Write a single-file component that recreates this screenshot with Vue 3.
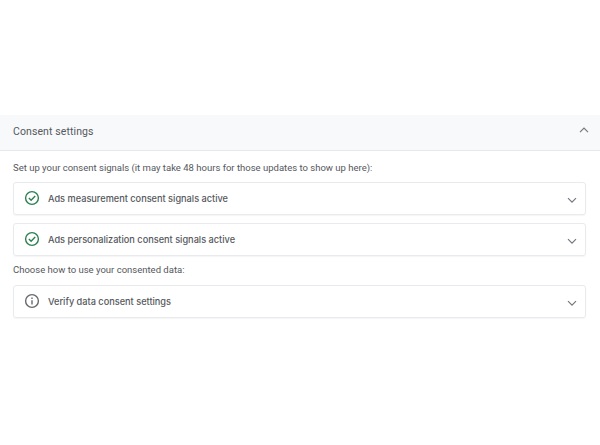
<script setup>
const signals = [
  { id: 1, label: 'Ads measurement consent signals active' },
  { id: 2, label: 'Ads personalization consent signals active' }
]
</script>

<template>
  <div class="page">
    <section class="panel">
      <header class="panel-head">
        <span class="panel-title">Consent settings</span>
        <svg class="chev-up" width="14" height="14" viewBox="0 0 14 14" fill="none">
          <path d="M3 9.2 L7 5.2 L11 9.2" stroke="#74787d" stroke-width="1.2" />
        </svg>
      </header>
      <div class="panel-body">
        <p class="hint first">Set up your consent signals (it may take 48 hours for those updates to show up here):</p>
        <div v-for="s in signals" :key="s.id" class="row">
          <svg class="icon" width="16" height="16" viewBox="0 0 16 16" fill="none">
            <circle cx="8" cy="8" r="6.4" stroke="#2b8050" stroke-width="1.4" />
            <path d="M4.9 8.1 L7.1 10.3 L11.2 6" stroke="#2b8050" stroke-width="1.4" />
          </svg>
          <span class="label">{{ s.label }}</span>
          <svg class="chev" width="14" height="14" viewBox="0 0 14 14" fill="none">
            <path d="M3 5.2 L7 9.2 L11 5.2" stroke="#74787d" stroke-width="1.2" />
          </svg>
        </div>
        <p class="hint second">Choose how to use your consented data:</p>
        <div class="row">
          <svg class="icon" width="16" height="16" viewBox="0 0 16 16" fill="none">
            <circle cx="8" cy="8" r="6.4" stroke="#66696d" stroke-width="1.4" />
            <path d="M8 7.2 V11.4" stroke="#66696d" stroke-width="1.4" />
            <path d="M8 4.5 V6" stroke="#66696d" stroke-width="1.4" />
          </svg>
          <span class="label">Verify data consent settings</span>
          <svg class="chev" width="14" height="14" viewBox="0 0 14 14" fill="none">
            <path d="M3 5.2 L7 9.2 L11 5.2" stroke="#74787d" stroke-width="1.2" />
          </svg>
        </div>
      </div>
    </section>
  </div>
</template>

<style>
html, body { margin: 0; background: #fff; }
</style>

<style scoped>
.page {
  width: 600px;
  height: 445px;
  padding-top: 115px;
  box-sizing: border-box;
  font-family: Roboto, "Liberation Sans", sans-serif;
  overflow: hidden;
}
.panel-head {
  height: 35px;
  background: #f8f9fb;
  border-bottom: 1px solid #e6e8ec;
  display: flex;
  align-items: center;
  justify-content: space-between;
  padding: 0 9px 0 13px;
}
.panel-title {
  font-size: 10.5px;
  color: #55585c;
  letter-spacing: 0.1px;
  margin-top: -2px;
}
.chev-up { margin-top: -5px; }
.panel-body { padding: 0 14px 0 13px; }
.hint {
  margin: 0;
  font-size: 9.5px;
  line-height: 14px;
  color: #55585c;
}
.hint.first { padding-top: 10px; padding-bottom: 7px; }
.hint.second { padding-top: 0; padding-bottom: 8px; margin-top: -1px; }
.row {
  height: 31px;
  border: 1px solid #e8eaed;
  border-radius: 3px;
  display: flex;
  align-items: center;
  padding: 0 6px 0 10px;
  margin-bottom: 8px;
  box-shadow: 0 1px 1px rgba(60, 64, 67, 0.05);
}
.icon { flex: none; margin-top: -1px; }
.label {
  margin-left: 8px;
  font-family: Inter, Roboto, sans-serif;
  font-size: 9.2px;
  font-weight: 500;
  color: #55585c;
  flex: 1;
}
.chev { flex: none; margin-top: 3px; }
</style>
